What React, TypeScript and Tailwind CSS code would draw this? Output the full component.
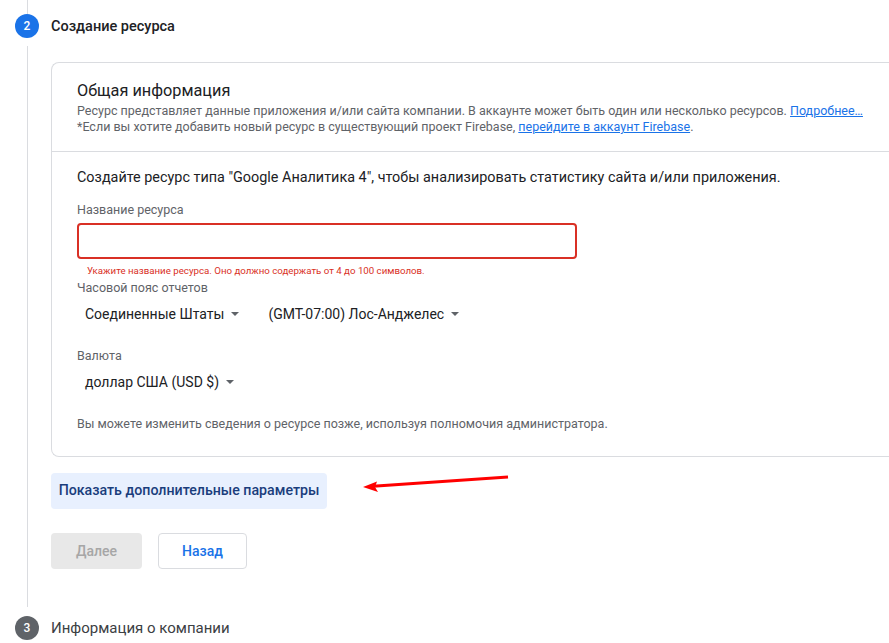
import React from "react";

const font = { fontFamily: "Roboto, 'Noto Sans', Arial, sans-serif" };

function Caret() {
  return (
    <svg width="8" height="4" viewBox="0 0 8 4" className="ml-[7px] text-[#5f6368]">
      <path d="M0 0h8L4 4z" fill="currentColor" />
    </svg>
  );
}

function Dropdown({ label }: { label: string }) {
  return (
    <div className="flex h-9 items-center px-2 text-sm text-[#202124]">
      <span>{label}</span>
      <Caret />
    </div>
  );
}

export default function App() {
  return (
    <div className="h-[643px] w-[889px] overflow-hidden bg-white" style={font}>
      {/* Step 2 */}
      <div className="flex">
        <div className="flex w-[51px] shrink-0 flex-col items-center pl-[3px]">
          <div className="h-[14px] w-px bg-[#dadce0]" />
          <div className="flex h-6 w-6 items-center justify-center rounded-full bg-[#1a73e8] text-xs font-medium text-white">
            2
          </div>
          <div className="mt-2 mb-[9px] w-px flex-1 bg-[#dadce0]" />
        </div>

        <div className="flex-1 pb-[47px]">
          <div className="flex h-[50px] items-center pt-[3px] text-[14.5px] font-medium text-[#202124]">
            Создание ресурса
          </div>

          {/* Card */}
          <div className="mt-3 rounded-l-lg border border-r-0 border-[#dadce0]">
            <div className="border-b border-[#dadce0] pt-4 pr-2 pb-4 pl-[25px]">
              <div className="text-[16.3px] leading-6 text-[#202124]">Общая информация</div>
              <div className="text-[12.5px] leading-4 text-[#5f6368]">
                Ресурс представляет данные приложения и/или сайта компании. В аккаунте может быть
                один или несколько ресурсов.{" "}
                <span className="text-[#1a73e8] underline">Подробнее…</span>
              </div>
              <div className="text-[12.5px] leading-4 text-[#5f6368]">
                *Если вы хотите добавить новый ресурс в существующий проект Firebase,{" "}
                <span className="text-[#1a73e8] underline">перейдите в аккаунт Firebase</span>.
              </div>
            </div>

            <div className="pt-4 pb-6 pl-[25px]">
              <div className="text-[14.4px] leading-5 text-[#202124]">
                Создайте ресурс типа "Google Аналитика 4", чтобы анализировать статистику сайта
                и/или приложения.
              </div>

              <div className="mt-[14px] text-[12.5px] leading-4 text-[#5f6368]">Название ресурса</div>
              <div className="mt-[5px] h-9 w-[500px] rounded border-2 border-[#d93025]" />
              <div className="mt-[6px] pl-[10px] text-[9.7px] leading-3 text-[#d93025]">
                Укажите название ресурса. Оно должно содержать от 4 до 100 символов.
              </div>

              <div className="mt-[3px] text-[12.5px] leading-4 text-[#5f6368]">Часовой пояс отчетов</div>
              <div className="flex gap-[13px]">
                <Dropdown label="Соединенные Штаты" />
                <Dropdown label="(GMT-07:00) Лос-Анджелес" />
              </div>

              <div className="mt-4 text-[12.5px] leading-4 text-[#5f6368]">Валюта</div>
              <Dropdown label="доллар США (USD $)" />

              <div className="mt-4 text-[12.5px] leading-4 text-[#5f6368]">
                Вы можете изменить сведения о ресурсе позже, используя полномочия администратора.
              </div>
            </div>
          </div>

          {/* Advanced */}
          <div className="relative mt-4">
            <button className="h-9 w-[276px] rounded bg-[#e8f0fe] text-[14.2px] font-medium text-[#1a3d7c]">
              Показать дополнительные параметры
            </button>
            <svg
              className="absolute top-0 left-[310px]"
              width="150"
              height="20"
              viewBox="0 0 150 20"
            >
              <line x1="147" y1="4" x2="12" y2="13.2" stroke="#ff0000" strokeWidth="3" />
              <path d="M2 14 L16 8.5 L14 14 L17 19 Z" fill="#ff0000" />
            </svg>
          </div>

          <div className="mt-6 flex gap-4">
            <button className="h-9 w-[91px] rounded bg-[#e8e8e8] text-sm font-medium text-[#a6a6a6]">
              Далее
            </button>
            <button className="h-9 w-[89px] rounded border border-[#dadce0] bg-white text-sm font-medium text-[#1a73e8]">
              Назад
            </button>
          </div>
        </div>
      </div>

      {/* Step 3 */}
      <div className="flex items-center">
        <div className="flex w-[51px] shrink-0 justify-center pl-[3px]">
          <div className="flex h-6 w-6 items-center justify-center rounded-full bg-[#5f6368] text-xs font-medium text-white">
            3
          </div>
        </div>
        <div className="text-[15px] text-[#3c4043]">Информация о компании</div>
      </div>
    </div>
  );
}
